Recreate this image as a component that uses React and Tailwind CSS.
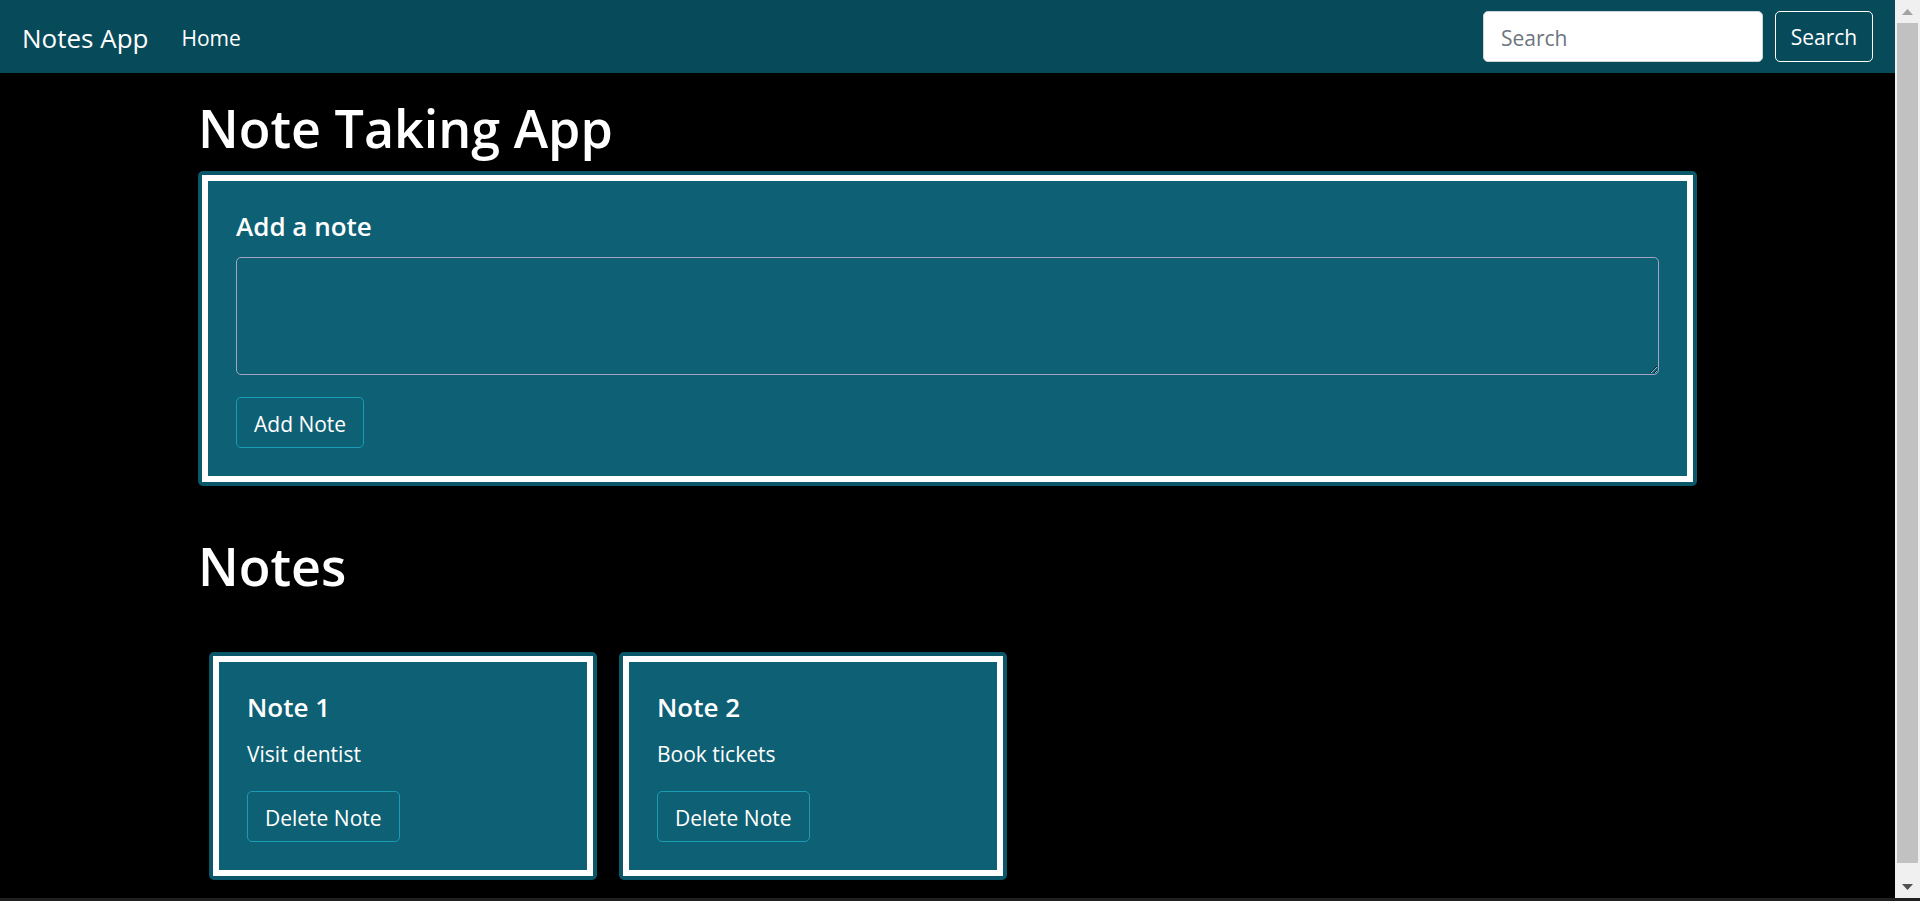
import React, { useState } from 'react';

// Notes app page: navbar, add-note card and the note list
const initialNotes = [
  { id: 1, title: 'Note 1', text: 'Visit dentist' },
  { id: 2, title: 'Note 2', text: 'Book tickets' },
];

function Navbar() {
  return (
    <nav className="flex items-center h-[73px] shrink-0 bg-[#074a5a] pl-[22px] pr-[22px]">
      <a href="#" className="pt-[3px] text-[26px] text-white leading-none">Notes App</a>
      <a href="#" className="ml-[33px] pt-[4px] text-[21px] text-white leading-none">Home</a>

      {/* Search form */}
      <form className="ml-auto flex items-center gap-[12px]" onSubmit={(e) => e.preventDefault()}>
        <input
          type="search"
          placeholder="Search"
          className="w-[280px] h-[51px] rounded-[5px] bg-white border border-[#ced4da] px-[17px] pt-[3px] text-[21px] text-[#212529] placeholder:text-[#6c757d] outline-none"
        />
        <button className="w-[98px] h-[51px] rounded-[5px] border border-white pt-[3px] text-[21px] text-white">
          Search
        </button>
      </form>
    </nav>
  );
}

function Card({ children, className = '' }) {
  return (
    <div className={`rounded-[5px] bg-[#0a576a] p-[4px] ${className}`}>
      <div className="border-[6px] border-white bg-[#0e6074] px-[28px] pt-[30px] pb-[28px]">{children}</div>
    </div>
  );
}

function Scrollbar() {
  return (
    <div className="w-[25px] shrink-0 bg-[#f0f0f0] flex flex-col items-center">
      <div className="h-[23px] w-full flex items-center justify-center">
        <svg width="11" height="6" viewBox="0 0 11 6">
          <path d="M5.5 0L11 6H0z" fill="#a3a3a3" />
        </svg>
      </div>
      <div className="w-[21px] h-[840px] bg-[#c1c1c1]" />
      <div className="flex-1" />
      <div className="h-[23px] w-full flex items-center justify-center">
        <svg width="11" height="6" viewBox="0 0 11 6">
          <path d="M0 0h11L5.5 6z" fill="#505050" />
        </svg>
      </div>
    </div>
  );
}

export default function App() {
  const [notes, setNotes] = useState(initialNotes);
  const [draft, setDraft] = useState('');

  const addNote = () => {
    if (!draft.trim()) return;
    setNotes([...notes, { id: Date.now(), title: `Note ${notes.length + 1}`, text: draft }]);
    setDraft('');
  };

  return (
    <div className="h-[901px] flex flex-col overflow-hidden bg-black font-['Open_Sans',sans-serif] text-white">
      <div className="flex flex-1 min-h-0">
        <div className="flex-1 flex flex-col min-w-0">
          <Navbar />

          <main className="px-[198px]">
            <h1 className="mt-[25px] text-[52px] leading-[60px] font-semibold">Note Taking App</h1>

            <Card className="mt-[13px]">
              <h5 className="text-[26px] leading-[30px] font-semibold mb-[16px]">Add a note</h5>
              <textarea
                value={draft}
                onChange={(e) => setDraft(e.target.value)}
                className="block w-full h-[118px] rounded-[5px] border border-[#a4a3c4] bg-transparent px-[15px] py-[8px] text-[21px] text-white outline-none"
              />
              <button
                onClick={addNote}
                className="mt-[22px] h-[51px] px-[17px] pt-[4px] rounded-[5px] border border-[#1a9db3] text-[21px] text-white"
              >
                Add Note
              </button>
            </Card>

            <h1 className="mt-[50px] text-[52px] leading-[60px] font-semibold">Notes</h1>

            <div className="mt-[56px] pl-[11px] flex gap-[22px]">
              {notes.map((note) => (
                <Card key={note.id} className="w-[388px]">
                  <h5 className="text-[26px] leading-[30px] font-semibold mb-[17px]">{note.title}</h5>
                  <p className="text-[21px] leading-[30px] mb-[22px]">{note.text}</p>
                  <button
                    onClick={() => setNotes(notes.filter((n) => n.id !== note.id))}
                    className="h-[51px] px-[17px] pt-[4px] rounded-[5px] border border-[#1a9db3] text-[21px] text-white"
                  >
                    Delete Note
                  </button>
                </Card>
              ))}
            </div>
          </main>
        </div>
        <Scrollbar />
      </div>
      <div className="h-[3px] shrink-0 bg-[#202020]" />
    </div>
  );
}
